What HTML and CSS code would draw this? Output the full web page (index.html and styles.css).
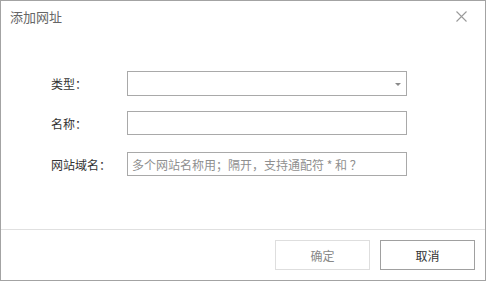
FILE: index.html
```html
<html>
  <head>
    <meta charset="UTF-8" />
    <link rel="stylesheet" href="styles.css">
  </head>
  <body>
    <div class="dialog">
      <div class="dialogHeader">
        <span class="dialogTitle">添加网址</span>
        <span class="dialogClose">
          <svg width="11" height="11" viewBox="0 0 11 11"><path d="M0.5 0.5 L10.5 10.5 M10.5 0.5 L0.5 10.5" stroke="#9a9a9a" stroke-width="1.1" fill="none"/></svg>
        </span>
      </div>
      <div class="dialogBody">
        <div class="formRow rowType">
          <label class="formLabel">类型：</label>
          <div class="formSelect">
            <span class="selectArrow"></span>
          </div>
        </div>
        <div class="formRow rowName">
          <label class="formLabel">名称：</label>
          <input class="formInput" type="text">
        </div>
        <div class="formRow rowDomain">
          <label class="formLabel">网站域名：</label>
          <input class="formInput" type="text" placeholder="多个网站名称用；隔开，支持通配符 * 和 ？">
        </div>
      </div>
      <div class="dialogFooter">
        <button class="btn btnDisabled">确定</button>
        <button class="btn">取消</button>
      </div>
    </div>
  </body>
</html>
```
FILE: styles.css
```css
body {
  margin: 0;
  font-family: "Noto Sans CJK SC", "Liberation Sans", sans-serif;
  font-size: 12px;
  color: #333;
}
.dialog {
  width: 486px;
  height: 281px;
  box-sizing: border-box;
  border: 1px solid #a3a3a3;
  background: #fff;
  display: flex;
  flex-direction: column;
}
.dialogHeader {
  height: 30px;
  padding: 0 18px 0 9px;
  display: flex;
  align-items: center;
  justify-content: space-between;
}
.dialogTitle {
  font-size: 13px;
  color: #666;
}
.dialogClose {
  display: flex;
  width: 11px;
  height: 11px;
}
.dialogBody {
  flex: 1;
  padding: 40px 0 0 50px;
}
.formRow {
  display: flex;
  align-items: center;
}
.rowName {
  margin-top: 15px;
}
.rowDomain {
  margin-top: 17px;
}
.formLabel {
  width: 76px;
  color: #333;
}
.formSelect,
.formInput {
  width: 280px;
  height: 24px;
  box-sizing: border-box;
  border: 1px solid #a9a9a9;
  margin: 0;
  padding: 0 4px;
  font-family: inherit;
  font-size: 12px;
  outline: none;
}
.formSelect {
  height: 25px;
  position: relative;
}
.formInput::placeholder {
  color: #8f8f8f;
}
.selectArrow {
  position: absolute;
  right: 5px;
  top: 11px;
  border-left: 3px solid transparent;
  border-right: 3px solid transparent;
  border-top: 3px solid #8a8a8a;
}
.dialogFooter {
  height: 51px;
  box-sizing: border-box;
  border-top: 1px solid #e0e0e0;
  padding: 10px 10px 0 0;
  display: flex;
  justify-content: flex-end;
  align-items: flex-start;
  gap: 10px;
}
.btn {
  width: 95px;
  height: 30px;
  background: #fff;
  border: 1px solid #a0a0a0;
  font-family: inherit;
  font-size: 12px;
  color: #333;
  padding: 0;
}
.btnDisabled {
  border-color: #dedede;
  color: #888;
}
```
